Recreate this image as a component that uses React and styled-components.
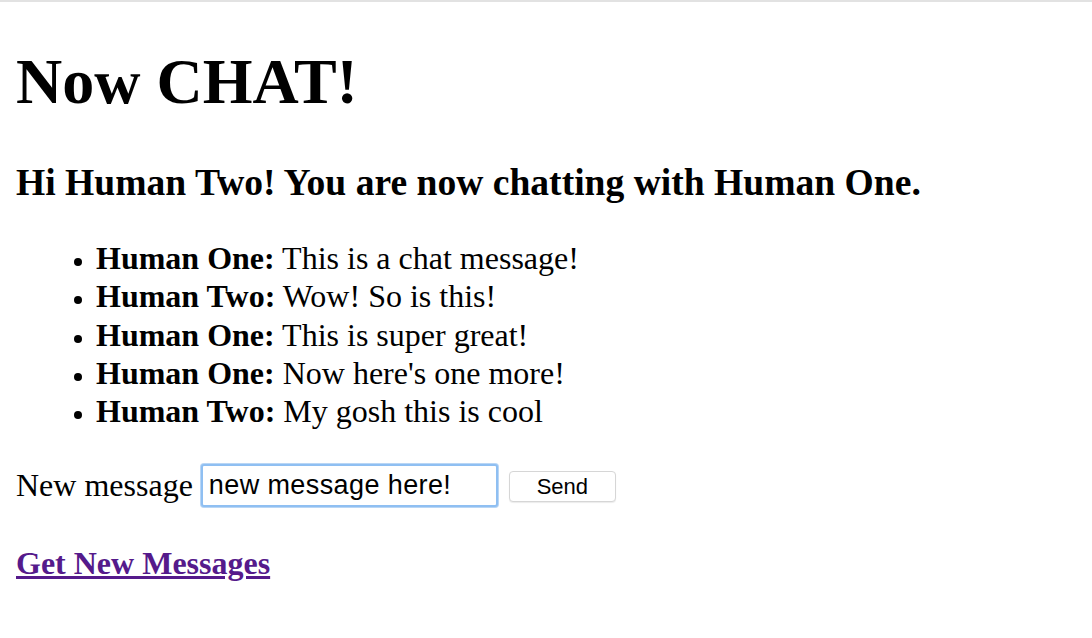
import React from 'react';
import styled, { createGlobalStyle } from 'styled-components';

const GlobalStyle = createGlobalStyle`
  html, body {
    margin: 0;
    padding: 0;
    background: #ffffff;
  }
  body {
    font-family: "Liberation Serif", "Times New Roman", serif;
    font-size: 32px;
    color: #000;
  }
`;

const TopRule = styled.div`
  height: 2px;
  background: #e2e2e2;
`;

const Page = styled.div`
  padding: 1px 16px 0;
`;

const Title = styled.h1`
  font-size: 64px;
  font-weight: bold;
  margin: 42px 0;
`;

const Greeting = styled.h3`
  font-size: 37.6px;
  font-weight: bold;
  margin: 37px 0 35px;
`;

const MessageList = styled.ul`
  list-style: disc;
  margin: 0;
  padding-left: 80px;
`;

const Message = styled.li`
  line-height: 38.25px;

  &::marker {
    font-size: 26px;
  }
`;

const Sender = styled.b`
  font-weight: bold;
`;

const ComposeForm = styled.form`
  display: flex;
  align-items: center;
  margin: 34px 0 0;
`;

const Label = styled.label`
  margin-right: 8px;
`;

const TextInput = styled.input`
  box-sizing: border-box;
  width: 297px;
  height: 43px;
  padding: 0 6px;
  font-family: "Liberation Sans", Arial, sans-serif;
  font-size: 27px;
  letter-spacing: 0.4px;
  color: #000;
  caret-color: #000;
  border: 2px solid #8fbff2;
  border-radius: 3px;
  box-shadow: 0 0 0 1px #b9d6f5;
  outline: none;
`;

const SendButton = styled.button`
  box-sizing: border-box;
  width: 107px;
  height: 31px;
  margin: 2px 0 0 11px;
  font-family: "Liberation Sans", Arial, sans-serif;
  font-size: 22px;
  color: #000;
  background: #fff;
  border: 1px solid #d6d6d6;
  border-radius: 4px;
  box-shadow: 0 1px 1px rgba(0, 0, 0, 0.08);
`;

const Footer = styled.h4`
  margin: 38px 0 0;
  font-size: 32px;
`;

const Link = styled.a`
  color: #551a8b;
  font-weight: bold;
`;

const messages = [
  { from: 'Human One', text: 'This is a chat message!' },
  { from: 'Human Two', text: 'Wow! So is this!' },
  { from: 'Human One', text: 'This is super great!' },
  { from: 'Human One', text: "Now here's one more!" },
  { from: 'Human Two', text: 'My gosh this is cool' },
];

export default function App() {
  return (
    <>
      <GlobalStyle />
      <TopRule />
      <Page>
        <Title>Now CHAT!</Title>
        <Greeting>Hi Human Two! You are now chatting with Human One.</Greeting>
        <MessageList>
          {messages.map((m, i) => (
            <Message key={i}>
              <Sender>{m.from}:</Sender> {m.text}
            </Message>
          ))}
        </MessageList>
        <ComposeForm onSubmit={(e) => e.preventDefault()}>
          <Label htmlFor="msg">New message</Label>
          <TextInput id="msg" defaultValue="new message here!" />
          <SendButton type="submit">Send</SendButton>
        </ComposeForm>
        <Footer>
          <Link href="#">Get New Messages</Link>
        </Footer>
      </Page>
    </>
  );
}
